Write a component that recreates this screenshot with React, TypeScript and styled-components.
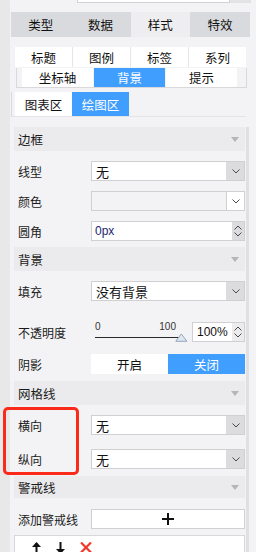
import styled, { createGlobalStyle } from 'styled-components'
import { FC } from 'react'

const blue = '#409eff'

const GlobalStyle = createGlobalStyle`
  html, body {
    margin: 0;
    padding: 0;
    background: #f3f3f5;
  }
  body {
    font-family: "Noto Sans CJK SC", "Noto Sans", sans-serif;
    color: #1a1a1a;
  }
`

const Chevron: FC<{ up?: boolean }> = ({ up }) => (
  <svg width="8" height="5" viewBox="0 0 8 5">
    <polyline
      points={up ? '0.5,4.5 4,1 7.5,4.5' : '0.5,0.5 4,4 7.5,0.5'}
      fill="none"
      stroke="#4a4a4a"
      strokeWidth="1"
    />
  </svg>
)

const Caret = () => (
  <svg width="8" height="5" viewBox="0 0 8 5">
    <polygon points="0,0 8,0 4,5" fill="#b5b5b8" />
  </svg>
)

const SelectBox: FC<{ value?: string; muted?: boolean }> = ({ value, muted }) => (
  <Select $muted={muted}>
    <SelectValue>{value}</SelectValue>
    <SelectButton $muted={muted}>
      <Chevron />
    </SelectButton>
  </Select>
)

const App: FC = () => {
  const mainTabs = ['类型', '数据', '样式', '特效']
  const subTabs = ['标题', '图例', '标签', '系列']
  const subTabs2 = ['坐标轴', '背景', '提示']

  return (
    <Page>
      <GlobalStyle />
      <LeftStrip />
      <Main>
        <TopStub>
          <StubInput />
          <StubButton />
        </TopStub>

        <MainTabs>
          {mainTabs.map((t) => (
            <MainTab key={t} $active={t === '样式'}>
              {t}
            </MainTab>
          ))}
        </MainTabs>

        <SubTabsTop>
          {subTabs.map((t) => (
            <SubTab key={t} $w={57}>
              {t}
            </SubTab>
          ))}
        </SubTabsTop>

        <SubTabsMid>
          {subTabs2.map((t) => (
            <SubTab key={t} $w={71} $active={t === '背景'}>
              {t}
            </SubTab>
          ))}
        </SubTabsMid>

        <SubTabsLow>
          <SubTab $w={57}>图表区</SubTab>
          <SubTab $w={57} $active>
            绘图区
          </SubTab>
        </SubTabsLow>

        <Body>
          <Panel>
            <SectionHeader $h={24} $mt={0}>
              边框
              <Caret />
            </SectionHeader>
            <Row $mt={10}>
              <Label>线型</Label>
              <SelectBox value="无" />
            </Row>
            <Row $mt={10}>
              <Label>颜色</Label>
              <SelectBox muted />
            </Row>
            <Row $mt={10}>
              <Label>圆角</Label>
              <NumberInput>
                <NumberValue>0px</NumberValue>
                <Spinner $dark>
                  <Chevron up />
                  <Chevron />
                </Spinner>
              </NumberInput>
            </Row>

            <SectionHeader $h={24} $mt={6}>
              背景
              <Caret />
            </SectionHeader>
            <Row $mt={10}>
              <Label>填充</Label>
              <SelectBox value="没有背景" />
            </Row>
            <Row $mt={21}>
              <Label>不透明度</Label>
              <Slider>
                <Scale>
                  <span>0</span>
                  <span>100</span>
                </Scale>
                <Track>
                  <TrackLine />
                  <svg width="13" height="9" viewBox="0 0 13 9" style={{ marginLeft: -5 }}>
                    <polygon
                      points="6.5,0.8 12.2,8.4 0.8,8.4"
                      fill="#dfe7f0"
                      stroke="#8ea4ba"
                      strokeWidth="1"
                    />
                  </svg>
                </Track>
              </Slider>
              <PercentInput>
                <PercentValue>100%</PercentValue>
                <Spinner>
                  <Chevron up />
                  <Chevron />
                </Spinner>
              </PercentInput>
            </Row>
            <Row $mt={12}>
              <Label>阴影</Label>
              <Toggle>
                <ToggleOption>开启</ToggleOption>
                <ToggleOption $active>关闭</ToggleOption>
              </Toggle>
            </Row>

            <SectionHeader $h={24} $mt={7}>
              网格线
              <Caret />
            </SectionHeader>
            <Row $mt={10}>
              <Label>横向</Label>
              <SelectBox value="无" />
            </Row>
            <Row $mt={14}>
              <Label>纵向</Label>
              <SelectBox value="无" />
            </Row>

            <SectionHeader $h={22} $mt={7}>
              警戒线
              <Caret />
            </SectionHeader>
            <Row $mt={11}>
              <Label>添加警戒线</Label>
              <AddButton>
                <svg width="12" height="12" viewBox="0 0 12 12">
                  <path d="M6 0v12M0 6h12" stroke="#111" strokeWidth="2" />
                </svg>
              </AddButton>
            </Row>
            <ListBox>
              <svg width="9" height="12" viewBox="0 0 9 12">
                <path d="M4.5 1v11" stroke="#111" strokeWidth="2" />
                <polygon points="4.5,0 9,5 0,5" fill="#111" />
              </svg>
              <svg width="9" height="12" viewBox="0 0 9 12">
                <path d="M4.5 0v10" stroke="#111" strokeWidth="2" />
                <polygon points="4.5,12 9,7 0,7" fill="#111" />
              </svg>
              <svg width="12" height="11" viewBox="0 0 12 11">
                <path d="M1 0.5l10 10M11 0.5l-10 10" stroke="#f0392b" strokeWidth="2.2" />
              </svg>
            </ListBox>
          </Panel>
          <ScrollTrack />
        </Body>
      </Main>
      <Highlight />
    </Page>
  )
}

const Page = styled.div`
  position: relative;
  display: flex;
  width: 256px;
  height: 552px;
  overflow: hidden;
  background: #f3f3f5;
`

const LeftStrip = styled.div`
  width: 10px;
  flex-shrink: 0;
  background: #e8e8e9;
`

const Main = styled.div`
  flex: 1;
  min-width: 0;
  display: flex;
  flex-direction: column;
`

const TopStub = styled.div`
  display: flex;
  height: 3px;
  margin-left: 67px;
`

const StubInput = styled.div`
  width: 151px;
  background: #fff;
  border: 1px solid #d2d2d5;
  border-top: none;
`

const StubButton = styled.div`
  width: 21px;
  background: #e3e3e6;
`

const MainTabs = styled.div`
  display: grid;
  grid-template-columns: repeat(4, 1fr);
  width: 239px;
  height: 25px;
  margin: 9px 0 0 1px;
`

const MainTab = styled.div<{ $active?: boolean }>`
  display: flex;
  align-items: center;
  justify-content: center;
  background: ${(p) => (p.$active ? '#eeeef0' : '#d9dadd')};
  font-size: 12.5px;
  color: #111;
`

const SubTab = styled.div<{ $w: number; $active?: boolean }>`
  display: flex;
  align-items: center;
  justify-content: center;
  width: ${(p) => p.$w}px;
  flex-shrink: 0;
  background: ${(p) => (p.$active ? blue : '#fff')};
  color: ${(p) => (p.$active ? '#fff' : '#111')};
  font-size: 12.5px;
`

const SubTabsTop = styled.div`
  display: flex;
  gap: 1px;
  width: 231px;
  height: 20px;
  margin: 10px 0 0 5px;
  background: #e6e6e8;
`

const SubTabsMid = styled.div`
  display: flex;
  gap: 1px;
  box-sizing: border-box;
  width: 231px;
  height: 20px;
  margin: 1px 0 0 6px;
  padding-left: 5px;
  border: 1px solid #d9d9dc;
  border-top: none;
`

const SubTabsLow = styled.div`
  display: flex;
  box-sizing: border-box;
  width: 235px;
  height: 25px;
  margin: 4px 0 0 1px;
  padding-left: 3px;
  border-left: 1px solid #d9d9dc;
  border-bottom: 1px solid #e4e4e6;
`

const Body = styled.div`
  flex: 1;
  min-height: 0;
  display: flex;
  margin-top: 10px;
`

const Panel = styled.div`
  display: flex;
  flex-direction: column;
  width: 231px;
  margin-left: 4px;
`

const ScrollTrack = styled.div`
  width: 3px;
  margin-left: 1px;
  background: #e0e0e3;
`

const SectionHeader = styled.div<{ $h: number; $mt: number }>`
  display: flex;
  align-items: center;
  justify-content: space-between;
  flex-shrink: 0;
  height: ${(p) => p.$h}px;
  margin-top: ${(p) => p.$mt}px;
  padding: 0 6px 0 4px;
  background: #ebebed;
  font-size: 12.5px;
  color: #1a1a1a;
`

const Row = styled.div<{ $mt: number }>`
  display: flex;
  align-items: center;
  flex-shrink: 0;
  height: 20px;
  margin-top: ${(p) => p.$mt}px;
`

const Label = styled.div`
  width: 77px;
  flex-shrink: 0;
  box-sizing: border-box;
  padding-left: 4px;
  font-size: 12px;
  color: #1a1a1a;
  white-space: nowrap;
`

const Select = styled.div<{ $muted?: boolean }>`
  flex: 1;
  display: flex;
  height: 100%;
  box-sizing: border-box;
  border: 1px solid #d0d0d3;
  background: ${(p) => (p.$muted ? '#f3f3f5' : '#fff')};
`

const SelectValue = styled.div`
  flex: 1;
  display: flex;
  align-items: center;
  padding-left: 4px;
  font-size: 13px;
  color: #111;
`

const SelectButton = styled.div<{ $muted?: boolean }>`
  width: 17px;
  display: flex;
  align-items: center;
  justify-content: center;
  background: ${(p) => (p.$muted ? '#fff' : '#dcdcdf')};
  border-left: 1px solid ${(p) => (p.$muted ? '#d0d0d3' : '#dcdcdf')};
`

const NumberInput = styled.div`
  flex: 1;
  display: flex;
  height: 100%;
  box-sizing: border-box;
  border: 1px solid #d0d0d3;
  background: #fff;
`

const NumberValue = styled.div`
  flex: 1;
  display: flex;
  align-items: center;
  padding-left: 3px;
  font-family: "Liberation Sans", Arial, sans-serif;
  font-size: 12px;
  color: #1c2670;
`

const Spinner = styled.div<{ $dark?: boolean }>`
  width: 12px;
  display: flex;
  flex-direction: column;
  align-items: center;
  justify-content: center;
  gap: 2px;
  background: ${(p) => (p.$dark ? '#dcdcdf' : '#ececee')};
`

const Slider = styled.div`
  display: flex;
  flex-direction: column;
  width: 97px;
  height: 20px;
  box-sizing: border-box;
  padding-left: 4px;
  flex-shrink: 0;
`

const Scale = styled.div`
  display: flex;
  justify-content: space-between;
  width: 81px;
  height: 11px;
  font-family: "Liberation Sans", Arial, sans-serif;
  font-size: 10px;
  line-height: 10px;
  color: #333;
`

const Track = styled.div`
  display: flex;
  align-items: flex-end;
  height: 9px;
`

const TrackLine = styled.div`
  width: 88px;
  height: 1px;
  margin-bottom: 4px;
  background: #2a2a2a;
`

const PercentInput = styled.div`
  display: flex;
  width: 53px;
  height: 20px;
  margin-left: 4px;
  box-sizing: border-box;
  border: 1px solid #d0d0d3;
  background: #fff;
`

const PercentValue = styled.div`
  flex: 1;
  display: flex;
  align-items: center;
  padding-left: 4px;
  font-family: "Liberation Sans", Arial, sans-serif;
  font-size: 12px;
  color: #111;
`

const Toggle = styled.div`
  flex: 1;
  display: grid;
  grid-template-columns: 1fr 1fr;
  height: 100%;
`

const ToggleOption = styled.div<{ $active?: boolean }>`
  display: flex;
  align-items: center;
  justify-content: center;
  background: ${(p) => (p.$active ? blue : '#fff')};
  color: ${(p) => (p.$active ? '#fff' : '#111')};
  font-size: 12.5px;
`

const AddButton = styled.div`
  flex: 1;
  display: flex;
  align-items: center;
  justify-content: center;
  height: 100%;
  box-sizing: border-box;
  border: 1px solid #d0d0d3;
  background: #fff;
`

const ListBox = styled.div`
  display: flex;
  align-items: flex-start;
  gap: 15px;
  flex-shrink: 0;
  height: 40px;
  margin-top: 6px;
  padding: 6px 0 0 17px;
  border: 1px solid #d8d8db;
  background: #fff;
`

const Highlight = styled.div`
  position: absolute;
  left: 3px;
  top: 407px;
  width: 76px;
  height: 68px;
  box-sizing: border-box;
  border: 3px solid #fb2b1c;
  border-radius: 5px;
`

export default App
